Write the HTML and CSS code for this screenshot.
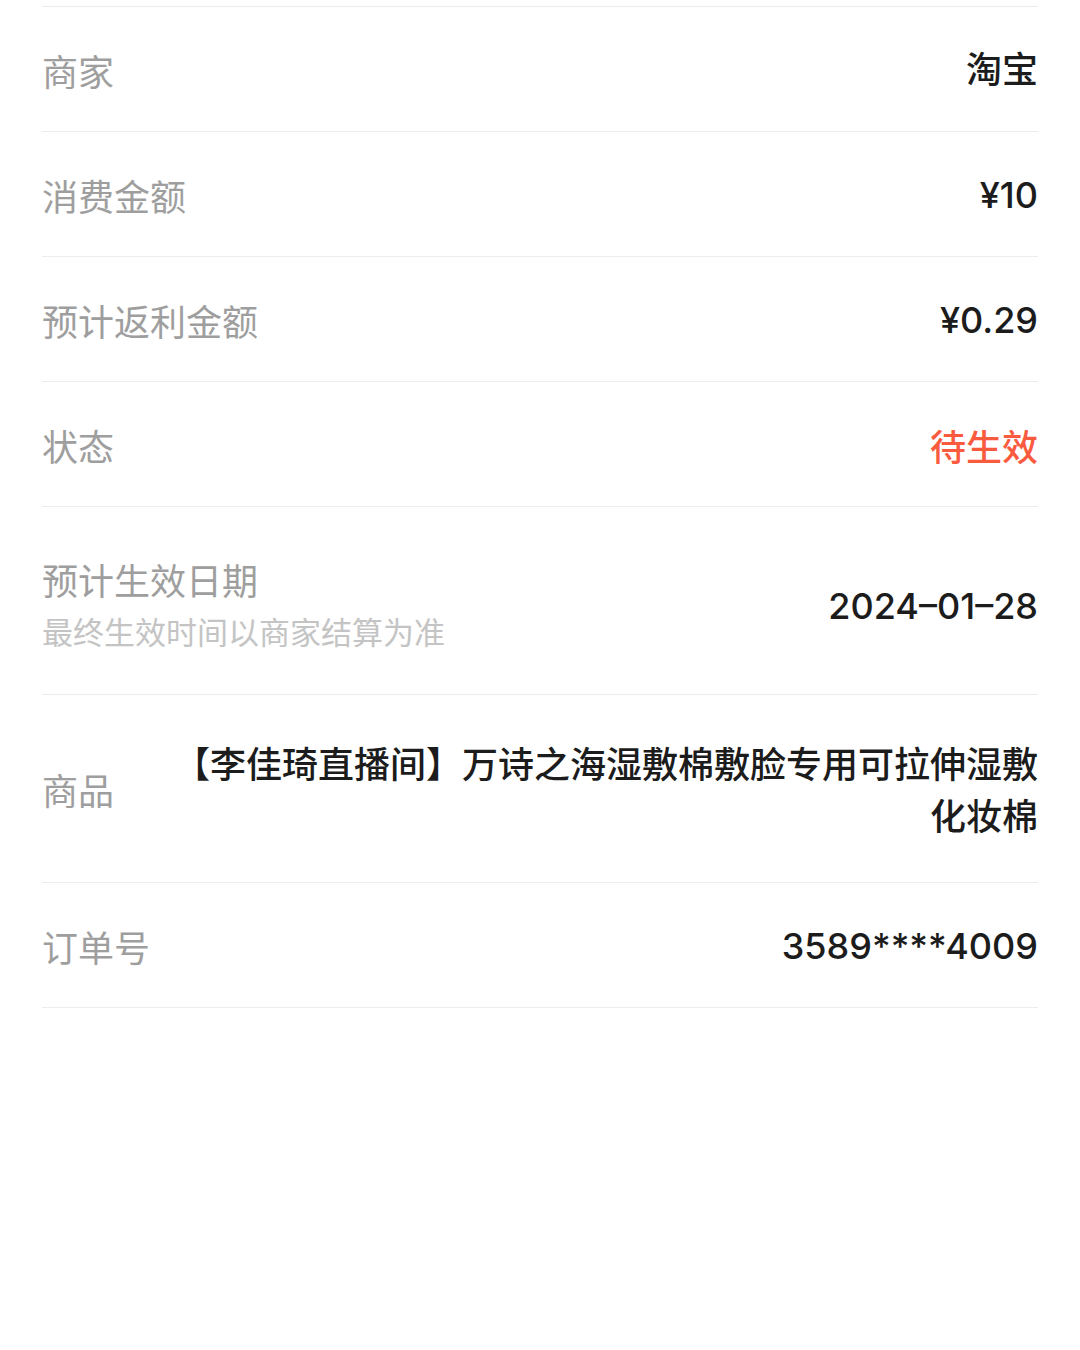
FILE: index.html
```html
<!DOCTYPE html>
<html lang="zh-CN">
  <head>
    <meta charset="UTF-8" />
    <meta name="viewport" content="width=device-width, initial-scale=1.0" />
    <title>订单详情</title>
    <link rel="stylesheet" href="styles.css">
  </head>
  <body>
    <div class="detail">
      <div class="detail__row">
        <div class="detail__label">商家</div>
        <div class="detail__value">淘宝</div>
      </div>
      <div class="detail__row">
        <div class="detail__label">消费金额</div>
        <div class="detail__value">¥10</div>
      </div>
      <div class="detail__row">
        <div class="detail__label">预计返利金额</div>
        <div class="detail__value">¥0.29</div>
      </div>
      <div class="detail__row">
        <div class="detail__label">状态</div>
        <div class="detail__value detail__value--pending">待生效</div>
      </div>
      <div class="detail__row detail__row--tall">
        <div class="detail__label">
          <div>预计生效日期</div>
          <div class="detail__hint">最终生效时间以商家结算为准</div>
        </div>
        <div class="detail__value">2024–01–28</div>
      </div>
      <div class="detail__row detail__row--wrap">
        <div class="detail__label">商品</div>
        <div class="detail__value detail__value--long">【李佳琦直播间】万诗之海湿敷棉敷脸专用可拉伸湿敷化妆棉</div>
      </div>
      <div class="detail__row">
        <div class="detail__label">订单号</div>
        <div class="detail__value">3589****4009</div>
      </div>
    </div>
  </body>
</html>
```

FILE: styles.css
```css
* {
  margin: 0;
  padding: 0;
  box-sizing: border-box;
}
body {
  background: #fff;
  font-family: Inter, "Noto Sans CJK SC", sans-serif;
}
.detail {
  margin: 6px 42px 0;
  border-top: 1px solid #ececec;
}
.detail__row {
  display: flex;
  align-items: center;
  justify-content: space-between;
  padding: 35px 0 36px;
  border-bottom: 1px solid #ececec;
  font-size: 36px;
  line-height: 50px;
}
.detail__row--tall {
  padding: 45px 0 38px;
}
.detail__row--wrap {
  padding: 41px 0 42px;
}
.detail__label {
  flex-shrink: 0;
  padding-top: 2px;
  color: #9e9e9e;
  font-family: "Noto Sans CJK SC", sans-serif;
}
.detail__hint {
  margin-top: 2px;
  font-size: 31px;
  color: #c4c4c4;
}
.detail__value {
  padding-top: 3px;
  color: #1c1c1c;
  font-weight: 500;
  text-align: right;
}
.detail__value--pending {
  color: #fa5a3e;
  font-family: "Noto Sans CJK SC", sans-serif;
}
.detail__value--long {
  flex: 1;
  margin-left: 48px;
  padding-top: 0;
  line-height: 52px;
  font-family: "Noto Sans CJK SC", sans-serif;
}
```
